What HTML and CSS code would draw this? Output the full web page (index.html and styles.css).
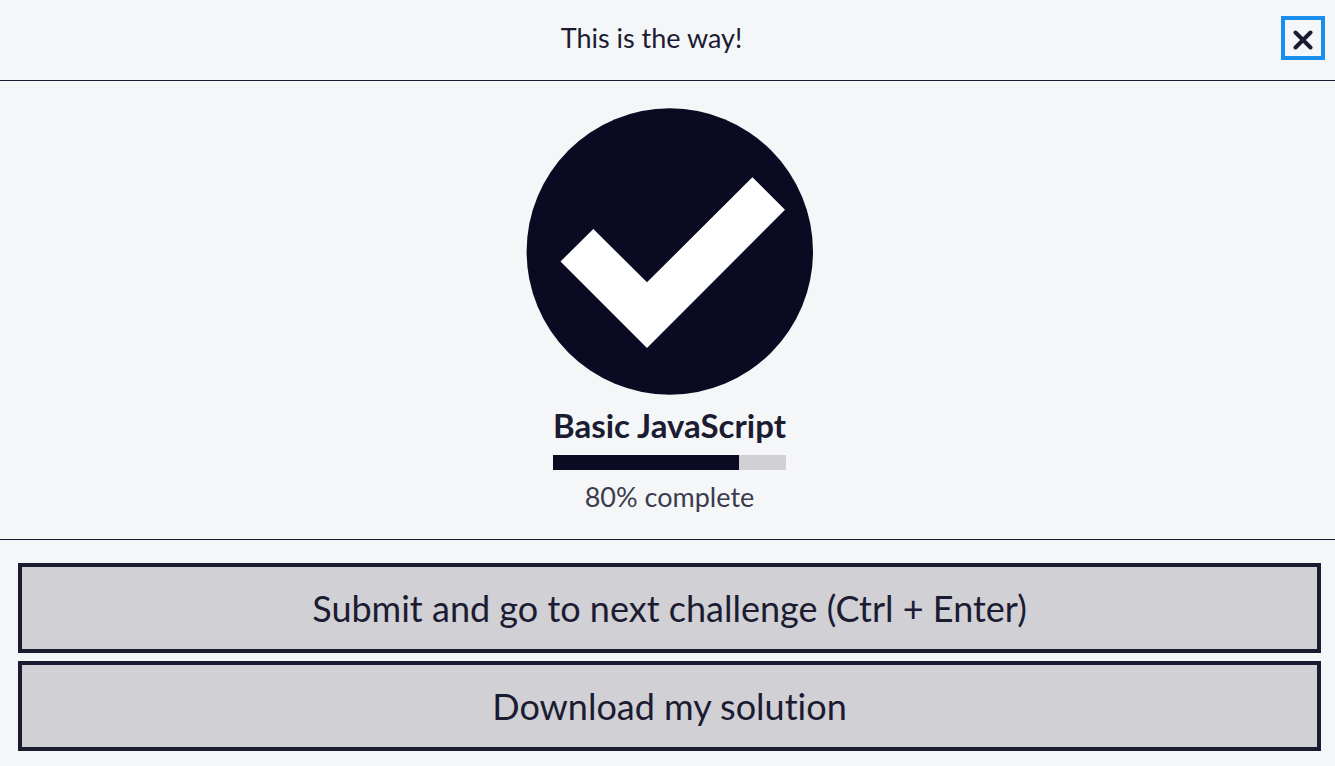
FILE: index.html
```html
<!DOCTYPE html>
<html lang="en">
<head>
<meta charset="utf-8">
<title>This is the way!</title>
<link rel="stylesheet" href="styles.css">
</head>
<body>
<main class="modal" role="dialog" aria-labelledby="modal-title">
  <header class="modal-header">
    <h1 class="modal-title" id="modal-title">This is the way!</h1>
    <button class="close" type="button" aria-label="Close">
      <svg class="close-icon" viewBox="0 0 20 20" aria-hidden="true"><path d="M2.5 2.5L17.5 17.5M17.5 2.5L2.5 17.5"/></svg>
    </button>
  </header>
  <section class="modal-body">
    <svg class="check" viewBox="0 0 287 287" aria-hidden="true">
      <circle cx="143.800" cy="143.500" r="143.200" fill="#0a0a23"/>
      <path d="M34.500 153.500L67.300 121L121 174.300L226.400 69.200L259 101.800L121 240Z" fill="#fff"/>
    </svg>
    <div class="completion">
      <h2 class="block-title">Basic JavaScript</h2>
      <div class="progress" role="progressbar" aria-label="Basic JavaScript" aria-valuenow="80" aria-valuemin="0" aria-valuemax="100">
        <div class="progress-fill" style="width: 80%"></div>
      </div>
    </div>
    <p class="percent">80% complete</p>
  </section>
  <footer class="modal-footer">
    <button class="action" type="button">Submit and go to next challenge (Ctrl + Enter)</button>
    <button class="action" type="button">Download my solution</button>
  </footer>
</main>
</body>
</html>
```
FILE: styles.css
```css
* { box-sizing: border-box; }
body {
  margin: 0;
  background: #f5f6f7;
  color: #1b1b32;
  font-family: Lato, sans-serif;
  font-variant-ligatures: none;
}
h1, h2, p { margin: 0; }
.modal-header {
  display: flex;
  align-items: center;
  padding: 16px 10px 20px;
  border-bottom: 1px solid #1b1b32;
}
.modal-title {
  flex: 1;
  padding-left: 12px;
  text-align: center;
  font-size: 27px;
  font-weight: 400;
  line-height: 40px;
}
.close {
  display: grid;
  place-items: center;
  width: 44px;
  height: 44px;
  padding: 4px 0 0;
  border: 4px solid #198eee;
  background: transparent;
  color: #1b1b32;
}
.close-icon {
  width: 20px;
  height: 20px;
  fill: none;
  stroke: currentColor;
  stroke-width: 4;
  stroke-linecap: round;
}
.modal-body {
  display: flex;
  flex-direction: column;
  align-items: center;
  padding: 27px 0 22px 4px;
  border-bottom: 1px solid #1b1b32;
}
.check { display: block; width: 287px; height: 287px; }
.block-title {
  padding: 10px 0;
  font-size: 33px;
  font-weight: 700;
  line-height: 40px;
}
.progress { height: 15px; background: #d0d0d5; }
.progress-fill { height: 100%; background: #0a0a23; }
.percent {
  padding-top: 7px;
  color: #3b3b4f;
  font-size: 27px;
  line-height: 40px;
}
.modal-footer {
  display: flex;
  flex-direction: column;
  gap: 8px;
  padding: 23px 14px 16px 18px;
}
.action {
  width: 100%;
  padding: 16px;
  border: 4px solid #1b1b32;
  background: #d0d0d5;
  color: #1b1b32;
  font-family: inherit;
  font-size: 36px;
  font-variant-ligatures: none;
  line-height: 50px;
}
```
